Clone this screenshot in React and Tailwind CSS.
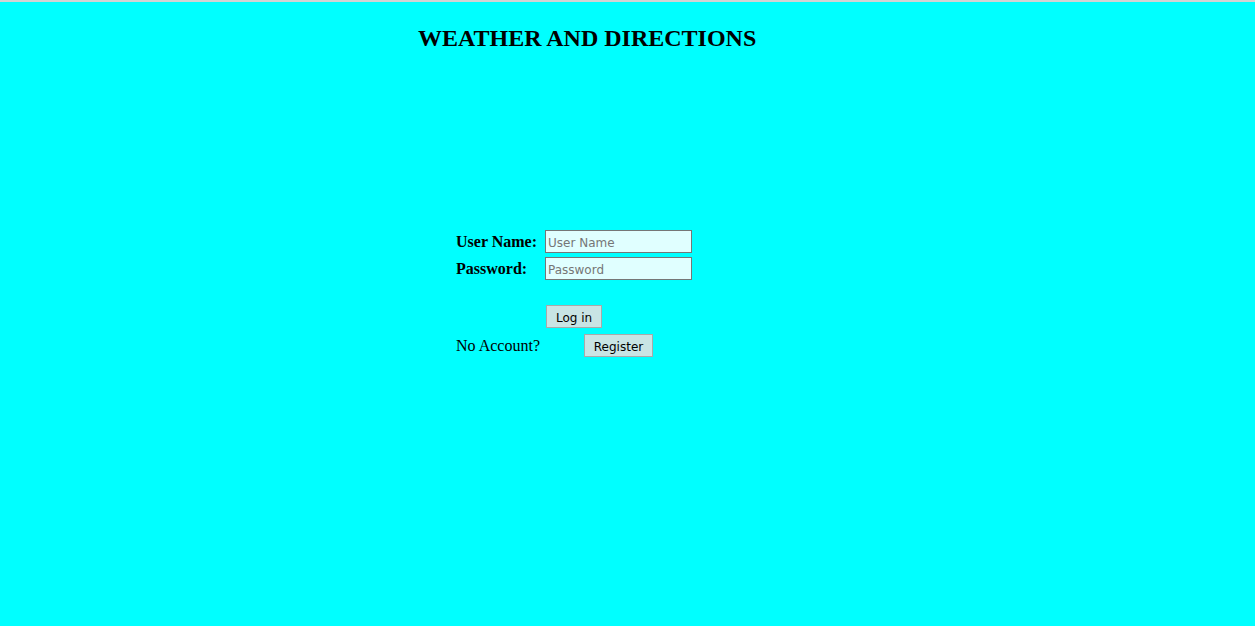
import React, { useState } from 'react';

function App() {
  const [userName, setUserName] = useState('');
  const [password, setPassword] = useState('');

  const serif = { fontFamily: '"Liberation Serif", "Times New Roman", serif' };

  return (
    <div className="min-h-[626px] bg-[#00ffff] border-t-2 border-[#d3d3d3]" style={serif}>
      <h2 className="pl-[418px] pt-[23px] text-[24px] leading-[27px] font-bold text-black">WEATHER AND DIRECTIONS</h2>

      <form className="mt-[178px] pl-[456px] flex flex-col text-[16px] text-black" onSubmit={(e) => e.preventDefault()}>
        <div className="flex items-center h-[23px]">
          <label htmlFor="userName" className="w-[89px] font-bold">User Name:</label>
          <input
            id="userName"
            type="text"
            value={userName}
            onChange={(e) => setUserName(e.target.value)}
            placeholder="User Name"
            className="w-[147px] h-[23px] px-[2px] pt-[2px] bg-[#e0ffff] border border-[#767676] text-[12px] text-black placeholder:text-[#767676] outline-none font-['DejaVu_Sans',sans-serif]"
          />
        </div>
        <div className="flex items-center h-[23px] mt-[4px]">
          <label htmlFor="password" className="w-[89px] font-bold">Password:</label>
          <input
            id="password"
            type="password"
            value={password}
            onChange={(e) => setPassword(e.target.value)}
            placeholder="Password"
            className="w-[147px] h-[23px] px-[2px] pt-[2px] bg-[#e0ffff] border border-[#767676] text-[12px] text-black placeholder:text-[#767676] outline-none font-['DejaVu_Sans',sans-serif]"
          />
        </div>
        <div className="flex items-center h-[23px] mt-[25px] pl-[90px]">
          <button type="submit" className="w-[56px] h-[23px] pt-[2px] bg-[#c8e4e4] border border-[#a9a9a9] text-[12px] text-black font-['DejaVu_Sans',sans-serif]">Log in</button>
        </div>
        <div className="flex items-center h-[23px] mt-[6px]">
          <span className="w-[128px]">No Account?</span>
          <button type="button" className="w-[69px] h-[23px] pt-[2px] bg-[#c8e4e4] border border-[#a9a9a9] text-[12px] text-black font-['DejaVu_Sans',sans-serif]">Register</button>
        </div>
      </form>
    </div>
  );
}

export default App;
